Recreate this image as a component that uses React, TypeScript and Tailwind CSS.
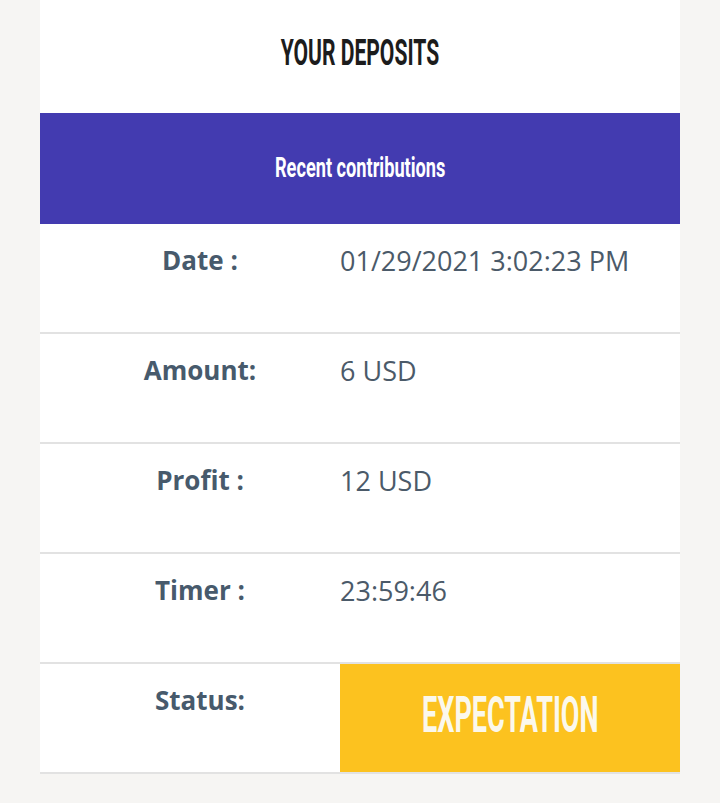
import React from "react";

const rows = [
  { label: "Date :", value: "01/29/2021 3:02:23 PM" },
  { label: "Amount:", value: "6 USD" },
  { label: "Profit :", value: "12 USD" },
  { label: "Timer :", value: "23:59:46" },
];

export default function App() {
  return (
    <div className="min-h-[803px] w-full bg-[#f6f5f3] px-10" style={{ fontFamily: "'Open Sans', sans-serif" }}>
      <div className="bg-white">
        <div className="flex h-[113px] items-center justify-center pb-[8px]">
          <span className="inline-block scale-x-[0.57] text-[37px] font-bold leading-none text-[#1c1c1c]" style={{ fontFamily: "Roboto, sans-serif" }}>
            YOUR DEPOSITS
          </span>
        </div>
        <div className="flex h-[111px] items-center justify-center bg-[#433bb0] pb-[2px]">
          <span className="inline-block scale-x-[0.65] text-[28px] font-bold leading-none text-white" style={{ fontFamily: "Roboto, sans-serif" }}>
            Recent contributions
          </span>
        </div>
        {rows.map((r) => (
          <div key={r.label} className="flex h-[110px] border-b-2 border-[#e2e2e2]">
            <div className="w-[300px] pl-5 pt-[20px] text-center text-[26px] font-bold leading-[32px] text-[#475a6c]">
              {r.label}
            </div>
            <div className="pt-[21px] text-[27px] leading-[32px] text-[#4b5a69]">{r.value}</div>
          </div>
        ))}
        <div className="flex h-[110px] border-b-2 border-[#e2e2e2]">
          <div className="w-[300px] pl-5 pt-[20px] text-center text-[26px] font-bold leading-[32px] text-[#475a6c]">
            Status:
          </div>
          <div className="flex flex-1 items-center justify-center bg-[#fcc21f] pb-[6px]">
            <span className="inline-block scale-x-[0.54] text-[50px] font-bold leading-none text-[#fbf8ec]" style={{ fontFamily: "Roboto, sans-serif" }}>
              EXPECTATION
            </span>
          </div>
        </div>
      </div>
    </div>
  );
}
